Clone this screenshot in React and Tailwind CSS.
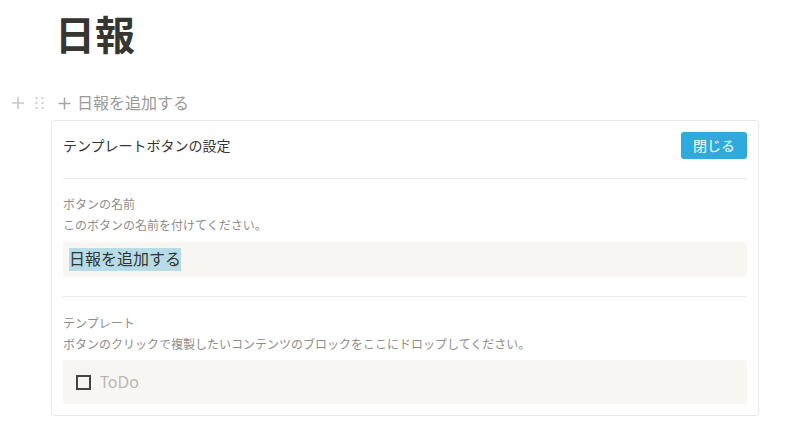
export default function App() {
  const font = { fontFamily: '"Noto Sans", "Noto Sans CJK JP", sans-serif' };
  return (
    <div className="w-[802px] h-[435px] bg-white text-[#37352f] overflow-hidden" style={font}>
      <div className="pl-[55px] pt-[11px] h-[88px]">
        <h1 className="text-[40px] font-bold leading-[48px] text-[#37352f]">日報</h1>
      </div>
      <div className="flex items-center h-[30px]">
        <div className="w-[35px] flex justify-center pl-[1px]">
          <svg width="14" height="14" viewBox="0 0 14 14">
            <path d="M7 1v12M1 7h12" stroke="#c7c6c4" strokeWidth="1.6" />
          </svg>
        </div>
        <div className="w-[19px] flex justify-start">
          <svg width="10" height="14" viewBox="0 0 10 14">
            {[0, 1, 2].map((r) => (
              <g key={r}>
                <rect x="0.5" y={1 + r * 5} width="2" height="2" fill="#cfcecc" />
                <rect x="6.5" y={1 + r * 5} width="2" height="2" fill="#cfcecc" />
              </g>
            ))}
          </svg>
        </div>
        <div className="flex items-center gap-[6px] text-[16px] text-[#9b9a97] pl-[4px]">
          <svg width="13" height="13" viewBox="0 0 13 13">
            <path d="M6.5 0.5v12M0.5 6.5h12" stroke="#a6a5a2" strokeWidth="1.5" />
          </svg>
          <span className="leading-[24px]">日報を追加する</span>
        </div>
      </div>
      <div className="ml-[51px] w-[708px] mt-[2px] border border-[#e9e9e7] rounded-[3px] px-[11px] pt-[11px] pb-[11px]">
        <div className="flex items-center justify-between pb-[19px] border-b border-[#ebebea]">
          <span className="text-[14px] leading-[20px]">テンプレートボタンの設定</span>
          <button className="bg-[#2eaadc] text-white text-[14px] leading-[20px] rounded-[3px] w-[66px] h-[27px]">閉じる</button>
        </div>
        <div className="pt-[16px] pb-[19px] border-b border-[#ebebea]">
          <div className="text-[12px] leading-[20px] text-[#8f8e8b]">ボタンの名前</div>
          <div className="text-[12px] leading-[20px] text-[#8f8e8b] mt-[1px]">このボタンの名前を付けてください。</div>
          <div className="mt-[6px] h-[35px] bg-[#f7f6f3] rounded-[3px] flex items-center pl-[6px]">
            <span className="bg-[#b6dcea] text-[16px] leading-[23px] text-[#37352f]">日報を追加する</span>
          </div>
        </div>
        <div className="pt-[17px]">
          <div className="text-[12px] leading-[20px] text-[#8f8e8b]">テンプレート</div>
          <div className="text-[12px] leading-[20px] text-[#8f8e8b] mt-[1px]">ボタンのクリックで複製したいコンテンツのブロックをここにドロップしてください。</div>
          <div className="mt-[5px] h-[44px] bg-[#f7f6f3] rounded-[3px] flex items-center pl-[13px]">
            <div className="w-[15px] h-[15px] border-2 border-[#45443f]" />
            <span className="ml-[9px] text-[16px] leading-[24px] text-[#b9b8b5]" style={{ fontFamily: '"Noto Sans", sans-serif' }}>ToDo</span>
          </div>
        </div>
      </div>
    </div>
  );
}
